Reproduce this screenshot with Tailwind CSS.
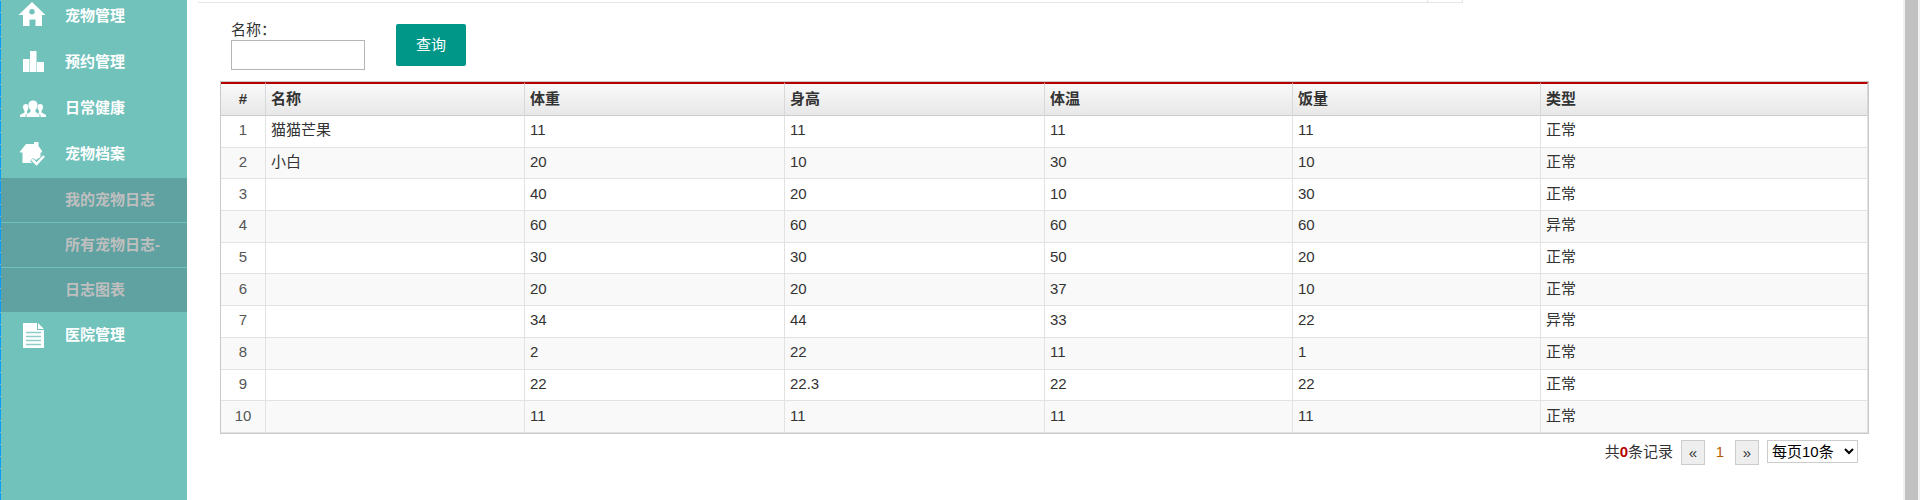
<!DOCTYPE html>
<html lang="zh-CN">
<head>
    <meta charset="UTF-8">
    <meta name="viewport" content="width=device-width, initial-scale=1.0">
    <title>宠物档案</title>
    <script src="https://cdn.jsdelivr.net/npm/@tailwindcss/browser@4"></script>
</head>
<body class="bg-white font-['Liberation_Sans','Noto_Sans_CJK_SC',sans-serif] text-[15px] leading-5 text-[#333] h-screen overflow-hidden flex">
    <!-- Sidebar -->
    <div class="w-px shrink-0 bg-[repeating-linear-gradient(to_bottom,#72c2bc_0_1px,#0a9dfb_1px_12px)]"></div>
    <nav class="w-[186px] shrink-0 bg-[#72c2bc] font-bold text-white">
        <ul class="-mt-1.5">
            <li>
                <a href="#" class="h-[46px] flex items-center pl-4 pb-0.5">
                    <svg class="w-8 h-8 mr-4" viewBox="0 0 32 32" fill="currentColor"><path fill-rule="evenodd" d="M15 2 28.500 15H25v11h-6.500v-6.500h-6V26H6V15H1.500ZM15 9a2.700 2.700 0 1 0 0 5.400A2.700 2.700 0 0 0 15 9Z"/></svg>
                    宠物管理
                </a>
            </li>
            <li>
                <a href="#" class="h-[46px] flex items-center pl-4 pb-0.5">
                    <svg class="w-8 h-8 mr-4" viewBox="0 0 32 32" fill="currentColor"><path d="M6 13h6.500v13H6zM13 5h6.500v21H13zM20 16h7v10h-7z"/></svg>
                    预约管理
                </a>
            </li>
            <li>
                <a href="#" class="h-[46px] flex items-center pl-4 pb-0.5">
                    <svg class="w-8 h-8 mr-4" viewBox="0 0 32 32" fill="currentColor"><path d="M3 25v-2l4.500-2.500v-1.500Q6 17 6 15q0-3 3-3 2 0 2.500 2 .5 3-1.500 5v1.500l1 .5-2.500 2V25ZM29 25v-2l-4.500-2.500v-1.500Q26 17 26 15q0-3-3-3-2 0-2.500 2-.5 3 1.500 5v1.500l-1 .5 2.500 2V25Z"/><path d="M9.500 25v-2.500l4-2.500v-2q-2-2-2-5 0-4.500 4.500-4.500t4.500 4.500q0 3-2 5v2l4 2.500V25Z"/></svg>
                    日常健康
                </a>
            </li>
            <li>
                <a href="#" class="h-[46px] flex items-center pl-4 pb-0.5">
                    <svg class="w-8 h-8 mr-4" viewBox="0 0 32 32" fill="currentColor"><path d="M3 13.500 9 6h8V4h4.500v4l3.500 5v1.500h-1.500V19l-4.500 3-3-2-3 3 2 2H5.500V14.500H3Z"/><path d="m15 21.500 4.500 4.500 7.500-8" fill="none" stroke="currentColor" stroke-width="2.500"/></svg>
                    宠物档案
                </a>
                <ul class="bg-[#5fa2a1] text-[#bfbfbf] divide-y divide-[#72c2bc]">
                    <li><a href="#" class="h-11 flex items-center pl-16">我的宠物日志</a></li>
                    <li><a href="#" class="h-11 flex items-center pl-16">所有宠物日志-</a></li>
                    <li><a href="#" class="h-11 flex items-center pl-16">日志图表</a></li>
                </ul>
            </li>
            <li>
                <a href="#" class="h-[46px] flex items-center pl-4">
                    <svg class="w-8 h-8 mr-4" viewBox="0 0 32 32" fill="currentColor"><path d="M6 4h14v7h7v18H6ZM21 4l6 6h-6Z"/><path d="M9 13.500h15M9 17.500h15M9 21.500h15M9 25.500h15" stroke="#8ecdc8" stroke-width="1.500"/></svg>
                    医院管理
                </a>
            </li>
        </ul>
    </nav>

    <!-- Content -->
    <main class="grow min-w-0 flex flex-col">
        <div class="ml-[11px] mr-[440px] h-[3px] border-b border-r border-[#e6e6e6] flex justify-end">
            <div class="w-[35px] border-l border-[#e6e6e6]"></div>
        </div>
        <form class="flex items-start pl-11 pt-[17px] h-[78px]">
            <div class="w-[134px] mr-[31px]">
                <label for="petName" class="block">名称：</label>
                <input id="petName" type="text" class="block w-full h-[30px] border border-[#b5b5b5] px-1 outline-none">
            </div>
            <button type="button" class="mt-1 w-[70px] h-[42px] rounded-xs bg-[#009688] text-white">查询</button>
        </form>
        <div class="ml-[33px] mr-[34px]">
            <table class="w-full h-[353px] table-fixed border-separate border-spacing-0 border border-[#c9c9c9] text-left">
                <colgroup>
                    <col class="w-[45px]">
                    <col class="w-[259px]">
                    <col class="w-[260px]">
                    <col class="w-[260px]">
                    <col class="w-[248px]">
                    <col class="w-[248px]">
                    <col>
                </colgroup>
                <thead class="[&_th]:h-[34px] [&_th]:border-t-2 [&_th]:border-t-[#b50000] [&_th]:border-r [&_th]:border-r-[#d8d8d8] [&_th]:border-b [&_th]:border-b-[#ccc] [&_th]:bg-linear-to-b [&_th]:from-[#f9f9f9] [&_th]:to-[#e8e8e8] [&_th]:px-[5px] [&_th]:pb-0.5 [&_th]:font-bold">
                    <tr>
                        <th class="text-center">#</th>
                        <th>名称</th>
                        <th>体重</th>
                        <th>身高</th>
                        <th>体温</th>
                        <th>饭量</th>
                        <th>类型</th>
                    </tr>
                </thead>
                <tbody id="petRows" class="[&_td]:border-r [&_td]:border-b [&_td]:border-[#e2e2e2] [&_td]:px-[5px] [&_td]:pb-0.5 [&_tr:nth-child(even)]:bg-[#f9f9f9] [&_td:first-child]:text-center [&_td:first-child]:text-[#555]"></tbody>
            </table>
            <div class="flex justify-end items-start mt-1.5 pr-[11px]">
                <span class="mt-0.5 mr-2">共<b class="text-[#b50000]">0</b>条记录</span>
                <button type="button" class="w-6 h-[25px] border border-[#ccc] bg-[#eee]">«</button>
                <span class="w-[30px] mt-0.5 text-center text-[#b85c00]">1</span>
                <button type="button" class="w-6 h-[25px] border border-[#ccc] bg-[#eee] mr-2">»</button>
                <select aria-label="每页条数" class="w-[91px] h-[23px] border border-[#ccc] bg-white text-black">
                    <option>每页10条</option>
                    <option>每页20条</option>
                </select>
            </div>
        </div>
    </main>

    <!-- Scrollbar -->
    <div class="w-[17px] shrink-0 bg-[#f1f1f1] pl-0.5 pr-0.5">
        <div class="h-full bg-[#c1c1c1]"></div>
    </div>

    <script>
        const rows = [
            ['猫猫芒果', 11, 11, 11, 11, '正常'],
            ['小白', 20, 10, 30, 10, '正常'],
            ['', 40, 20, 10, 30, '正常'],
            ['', 60, 60, 60, 60, '异常'],
            ['', 30, 30, 50, 20, '正常'],
            ['', 20, 20, 37, 10, '正常'],
            ['', 34, 44, 33, 22, '异常'],
            ['', 2, 22, 11, 1, '正常'],
            ['', 22, 22.3, 22, 22, '正常'],
            ['', 11, 11, 11, 11, '正常'],
        ];
        document.getElementById('petRows').innerHTML = rows.map((row, i) =>
            `<tr><td>${i + 1}</td>${row.map(v => `<td>${v}</td>`).join('')}</tr>`
        ).join('');
    </script>
</body>
</html>
